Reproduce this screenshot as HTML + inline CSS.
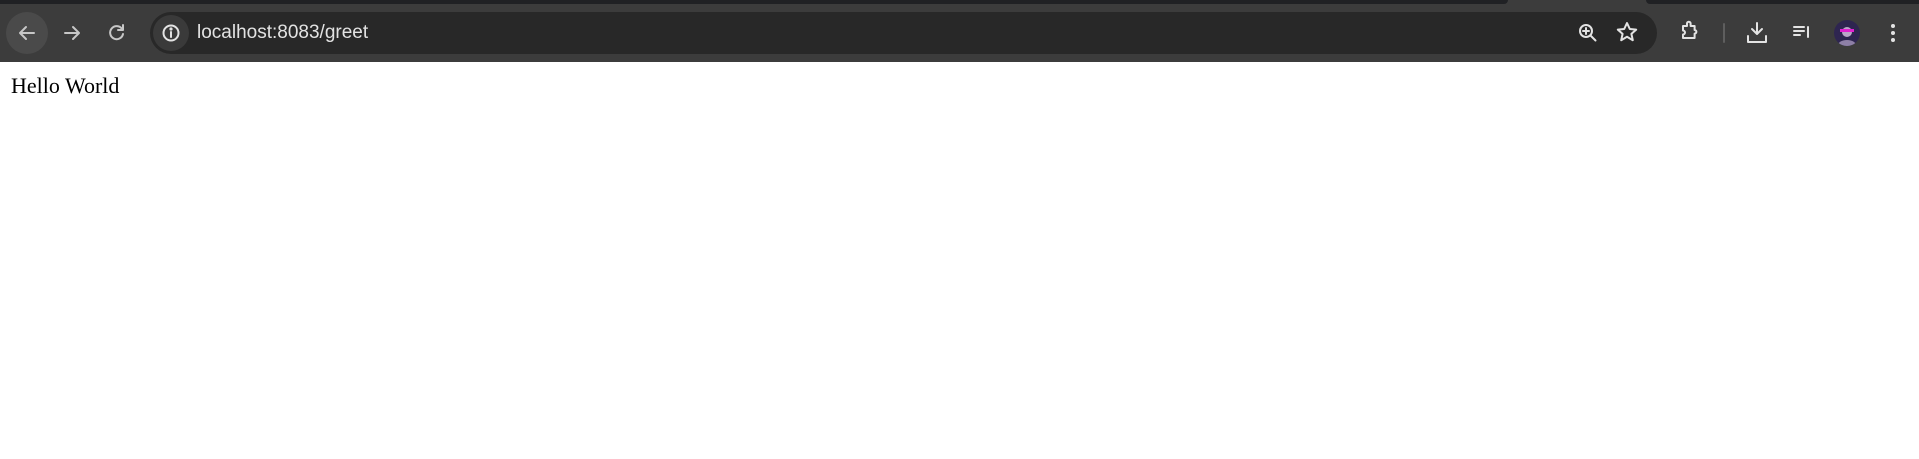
<!DOCTYPE html>
<html><head><style>
html,body{margin:0;padding:0;width:1919px;height:459px;overflow:hidden;background:#fff}
.top{position:absolute;left:0;top:0;width:1919px;height:62px;background:#3c3c3c}
.strip{position:absolute;left:0;top:0;width:1508px;height:4px;background:#202124;border-bottom-right-radius:6px}
.strip2{position:absolute;left:1646px;top:0;width:273px;height:4px;background:#202124;border-bottom-left-radius:6px}
.omni{position:absolute;left:150px;top:12px;width:1507px;height:42px;border-radius:21px;background:#282828}
.info{position:absolute;left:153px;top:15px;width:36px;height:36px;border-radius:18px;background:#3a3a3a}
.url{position:absolute;left:197px;top:22px;font:19px "Liberation Sans",sans-serif;color:#e3e3e3}
.back{position:absolute;left:6px;top:12px;width:42px;height:42px;border-radius:21px;background:#4a4a4a}
svg{position:absolute}
.hw{position:absolute;left:11px;top:73px;font:22px "Liberation Serif",serif;color:#000}
</style></head><body>
<div class="top"></div><div class="strip"></div><div class="strip2"></div>
<div class="back"></div>
<svg width="1919" height="62" style="left:0;top:0" fill="none" stroke="#c7c7c7" stroke-width="2" stroke-linecap="round" stroke-linejoin="round">
<path d="M34 33H20M26 27l-6 6 6 6"/>
<path d="M65 33h14M73 27l6 6-6 6"/>
<path d="M122 29a6.5 6.5 0 1 0 1 5M123 25v5h-5"/>
</svg>
<div class="omni"></div><div class="info"></div>
<svg width="1919" height="62" style="left:0;top:0" fill="none" stroke="#e3e3e3" stroke-width="2" stroke-linecap="round" stroke-linejoin="round">
<circle cx="171" cy="33" r="7.5"/><path d="M171 32v5"/><circle cx="171" cy="29" r=".6" fill="#e3e3e3"/>
<circle cx="1586" cy="31" r="6"/><path d="M1590.5 35.5l5 5M1586 28v6M1583 31h6"/>
<path d="M1627 23l2.8 6 6.4.6-4.8 4.3 1.4 6.3-5.8-3.4-5.8 3.4 1.4-6.3-4.8-4.3 6.4-.6z"/>
<path d="M1683 26h4v-2.5a1.8 1.8 0 0 1 3.6 0V26h4v4a1.8 1.8 0 0 1 0 3.6V38h-11.6v-3.5a2 2 0 0 0 0-4V26"/>
<path d="M1724 24v18" stroke="#5e5e5e"/>
<path d="M1757 23v11M1752 29l5 5 5-5M1748 36v6h18v-6"/>
<path d="M1794 27h10M1794 31h10M1794 35h6M1808 27v10"/>
</svg>
<svg width="26" height="26" style="left:1834px;top:20px"><defs><clipPath id="c"><circle cx="13" cy="13" r="13"/></clipPath></defs><g clip-path="url(#c)"><rect width="26" height="26" fill="#2e2550"/><circle cx="13" cy="12" r="5" fill="#b9a6c8"/><rect x="6" y="9" width="14" height="3" fill="#e020d0"/><ellipse cx="13" cy="27" rx="10" ry="7" fill="#8d7fa6"/></g></svg>
<svg width="10" height="30" style="left:1888px;top:20px" fill="#e3e3e3"><circle cx="5" cy="6" r="2"/><circle cx="5" cy="13" r="2"/><circle cx="5" cy="20" r="2"/></svg>
<div class="url">localhost:8083/greet</div>
<div class="hw">Hello World</div>
</body></html>
